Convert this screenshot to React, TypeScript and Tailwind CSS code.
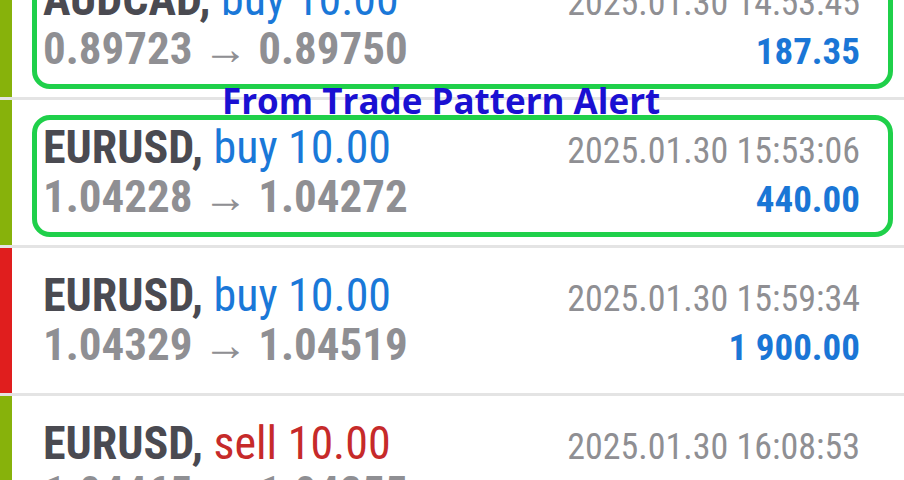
import * as React from 'react';

type Trade = {
  symbol: string;
  side: 'buy' | 'sell';
  volume: string;
  time: string;
  open: string;
  close: string;
  profit: string;
  bar: 'green' | 'red';
  marked: boolean;
};

const trades: Trade[] = [
  { symbol: 'AUDCAD', side: 'buy', volume: '10.00', time: '2025.01.30 14:53:45', open: '0.89723', close: '0.89750', profit: '187.35', bar: 'green', marked: true },
  { symbol: 'EURUSD', side: 'buy', volume: '10.00', time: '2025.01.30 15:53:06', open: '1.04228', close: '1.04272', profit: '440.00', bar: 'green', marked: true },
  { symbol: 'EURUSD', side: 'buy', volume: '10.00', time: '2025.01.30 15:59:34', open: '1.04329', close: '1.04519', profit: '1 900.00', bar: 'red', marked: false },
  { symbol: 'EURUSD', side: 'sell', volume: '10.00', time: '2025.01.30 16:08:53', open: '1.04465', close: '1.04255', profit: '-2 100.00', bar: 'green', marked: false },
];

const roboto = { fontFamily: 'Roboto, "Liberation Sans", sans-serif' };

function TradeRow({ trade }: { trade: Trade }) {
  return (
    <div className="flex h-[148px] border-b-[3px] border-[#e4e4e4]">
      <div className={`w-[12px] shrink-0 ${trade.bar === 'green' ? 'bg-[#87b20b]' : 'bg-[#e01e1e]'}`} />
      <div className="flex-1 pl-[20px] pr-[11px]">
        <div
          className={`mt-[15px] h-[122px] rounded-[18px] border-[5px] pl-[6px] pr-[28px] ${
            trade.marked ? 'border-[#1fd04a]' : 'border-transparent'
          }`}
        >
          {/* symbol + time */}
          <div className="flex h-[52px] items-baseline justify-between leading-[54px] font-stretch-condensed">
            <div className="text-[46px]">
              <span className="font-bold text-[#4a4a51]">{trade.symbol},</span>{' '}
              <span className={trade.side === 'buy' ? 'text-[#1a78d8]' : 'text-[#c62a2a]'}>
                {trade.side} {trade.volume}
              </span>
            </div>
            <div className="text-[36px] text-[#8f8f93]">{trade.time}</div>
          </div>
          {/* prices + profit */}
          <div className="flex h-[50px] items-baseline justify-between leading-[50px] font-stretch-condensed">
            <div className="text-[45px] font-bold text-[#8f8f93]">
              {trade.open} → {trade.close}
            </div>
            <div className="text-[37px] font-bold text-[#1a76d6]">{trade.profit}</div>
          </div>
        </div>
      </div>
    </div>
  );
}

export default function App() {
  return (
    <div className="relative h-[480px] w-[904px] overflow-hidden bg-white" style={roboto}>
      {/* list scrolled a bit, first row is cut off */}
      <div className="-mt-[48px]">
        {trades.map((t, i) => (
          <TradeRow key={i} trade={t} />
        ))}
      </div>

      {/* annotation on top */}
      <div
        className="absolute left-[222px] top-[83px] text-[35px] font-bold leading-none text-[#1a10d2]"
        style={{ fontFamily: '"Open Sans", "Noto Sans", sans-serif' }}
      >
        From Trade Pattern Alert
      </div>
    </div>
  );
}
